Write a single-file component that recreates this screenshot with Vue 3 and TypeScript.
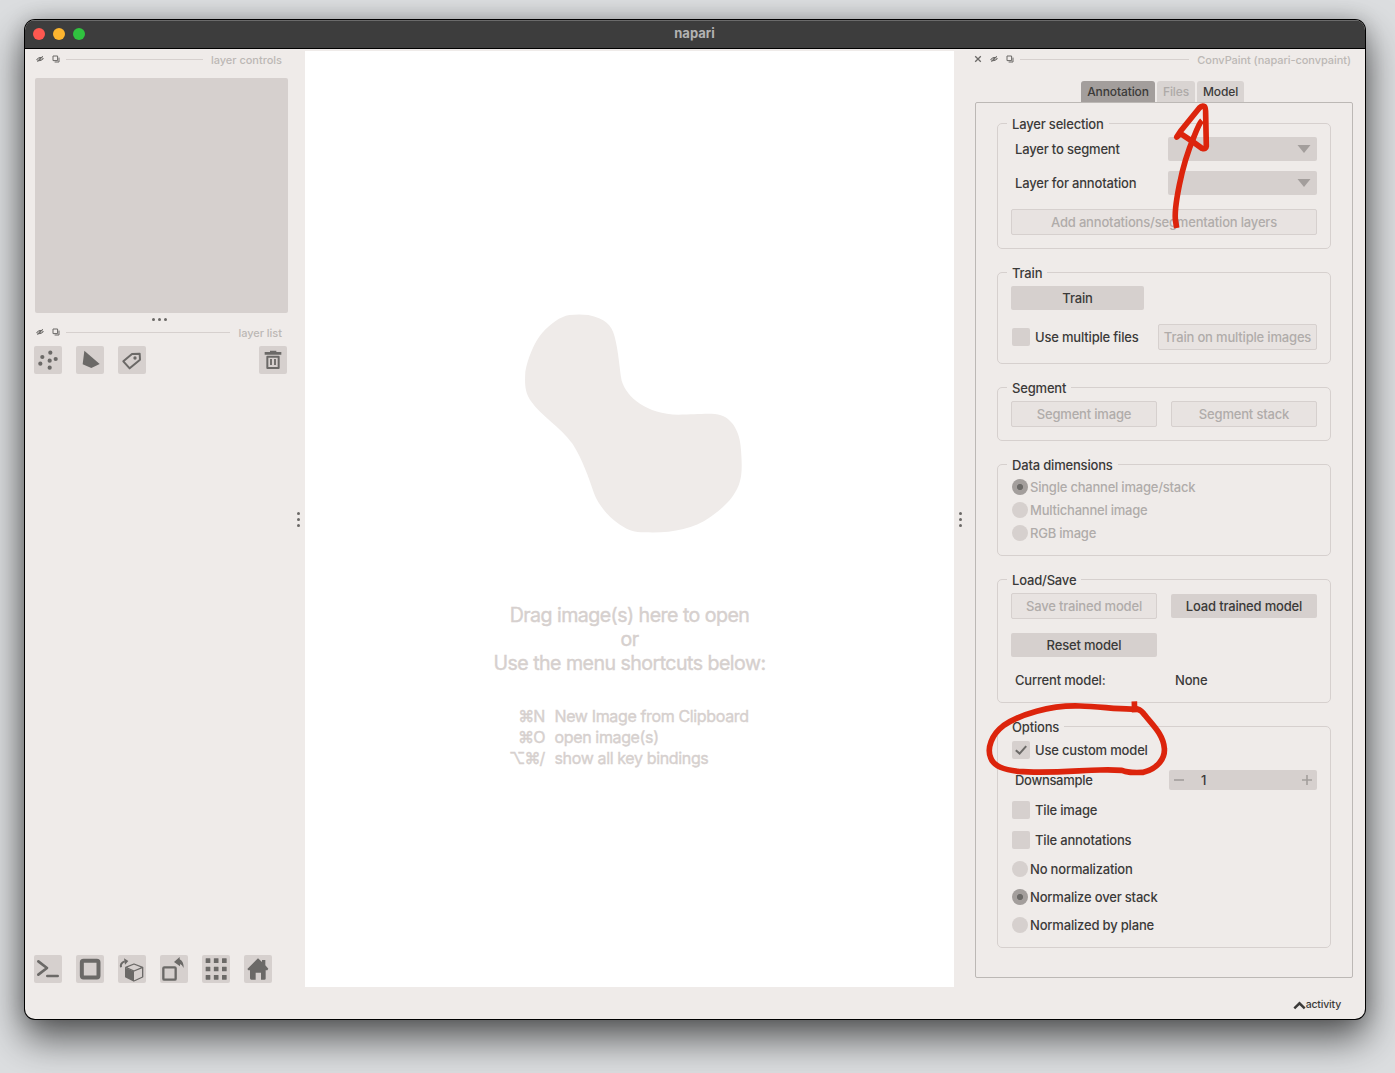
<script setup lang="ts">
interface Shortcut {
  keys: string
  label: string
}

const shortcuts: Shortcut[] = [
  { keys: '⌘N', label: 'New Image from Clipboard' },
  { keys: '⌘O', label: 'open image(s)' },
  { keys: '⌥⌘/', label: 'show all key bindings' },
]

const dimensions: string[] = ['Single channel image/stack', 'Multichannel image', 'RGB image']
const normalizations: string[] = ['No normalization', 'Normalize over stack', 'Normalized by plane']
const gridCells: number[] = [0, 1, 2, 3, 4, 5, 6, 7, 8]
</script>

<template>
  <div class="desktop">
    <div class="window">
      <header class="titlebar">
        <div class="lights"><i class="red"></i><i class="amber"></i><i class="green"></i></div>
        <span class="title">napari</span>
      </header>

      <div class="body">
        <aside class="left">
          <div class="dock-title">
            <svg class="mini" viewBox="0 0 8 8"><path d="M.6 4.6Q4 .8 7.4 3.6Q4 7.2 .6 4.6Z" /><circle cx="4" cy="4.1" r="1.1" /><path d="M1.4 7L6.8 1" /></svg>
            <svg class="mini" viewBox="0 0 8 8"><path d="M1 1h4.6v4.6H1z" /><path d="M7 2.6V7H2.6" /></svg>
            <hr /><span>layer controls</span>
          </div>
          <div class="controls"></div>
          <div class="dots-h"><i></i><i></i><i></i></div>
          <div class="dock-title list">
            <svg class="mini" viewBox="0 0 8 8"><path d="M.6 4.6Q4 .8 7.4 3.6Q4 7.2 .6 4.6Z" /><circle cx="4" cy="4.1" r="1.1" /><path d="M1.4 7L6.8 1" /></svg>
            <svg class="mini" viewBox="0 0 8 8"><path d="M1 1h4.6v4.6H1z" /><path d="M7 2.6V7H2.6" /></svg>
            <hr /><span class="ll">layer list</span>
          </div>
          <div class="tools">
            <button class="tool"><svg viewBox="0 0 84 84"><g class="f"><circle cx="49" cy="20" r="6.3" /><circle cx="25" cy="33" r="6.3" /><circle cx="65" cy="39" r="6.3" /><circle cx="47" cy="44" r="6.3" /><circle cx="19" cy="53" r="6.3" /><circle cx="47" cy="65" r="6.3" /></g></svg></button>
            <button class="tool"><svg viewBox="0 0 84 84"><path class="f" d="M25 14L71 54L46 66L20 55Z" /></svg></button>
            <button class="tool"><svg viewBox="0 0 84 84"><path class="s" stroke-width="6" stroke-linejoin="round" d="M42 24L65 23L66 41L35 67L16 46Z" /><circle class="f" cx="51" cy="36" r="5" /></svg></button>
            <button class="tool trash"><svg viewBox="0 0 84 84"><path class="f" d="M33 18V14h19v4h15v8H17v-8z" /><path class="s" stroke-width="6" stroke-linejoin="round" d="M25 32h34v34H25z" /><path class="s" stroke-width="5.5" d="M36 39v18M48 39v18" /></svg></button>
          </div>
          <div class="spacer"></div>
          <div class="tools bottom">
            <button class="tool"><svg viewBox="0 0 84 84"><path class="s" stroke-width="8" stroke-linecap="round" stroke-linejoin="round" d="M13 19L39 39L13 59M40 63H71" /></svg></button>
            <button class="tool"><svg viewBox="0 0 84 84"><rect class="s" x="17.5" y="17.5" width="50" height="50" rx="5" stroke-width="12" /></svg></button>
            <button class="tool"><svg viewBox="0 0 84 84"><path class="f" d="M21 38L48 49V80L21 67Z" /><path class="s" stroke-width="4" stroke-linejoin="round" d="M23 37L48 27L74 37L48 48ZM74 37V66L48 78" /><path class="s" stroke-width="6" d="M9 37Q6 24 20 19" /><path class="f" d="M18 10L31 18L21 29Z" /></svg></button>
            <button class="tool"><svg viewBox="0 0 84 84"><rect class="s" x="10" y="37" width="37" height="37" rx="3" stroke-width="7" /><path class="f" d="M42 21L59 6V13Q71 18 71 39Q66 28 60 27V34Z" /></svg></button>
            <button class="tool"><svg viewBox="0 0 84 84"><rect v-for="n in gridCells" :key="n" class="f" :x="11 + (n % 3) * 24.5" :y="10 + Math.floor(n / 3) * 25" width="14" height="14" rx="1" /></svg></button>
            <button class="tool"><svg viewBox="0 0 84 84"><path class="f" d="M42 10L54 21V15H64V31L73 41L70 46H65V71Q65 74 61 74H51V53H35V74H22Q18 74 18 70V46H13L10 42Z" /></svg></button>
          </div>
        </aside>

        <div class="handle"><i></i><i></i><i></i></div>

        <main class="canvas">
          <svg class="blob" viewBox="0 0 780 750"><path d="M208 45Q238 42 265 45C315 55 335 75 344 110C356 155 358 205 365 242C380 292 440 342 535 344C580 344 610 340 645 342C695 346 721 395 723 450C728 520 726 550 697 590C675 619 650 637 630 652C575 690 510 700 433 697C405 697 385 691 361 675C325 651 295 615 282 580C265 530 248 480 218 432C180 378 125 350 92 302C74 276 74 250 76 215C83 175 103 125 127 98C153 70 180 50 208 45Z" /></svg>
          <div class="welcome">
            <p>Drag image(s) here to open</p>
            <p>or</p>
            <p class="w3">Use the menu shortcuts below:</p>
          </div>
          <div class="shortcuts">
            <template v-for="s in shortcuts" :key="s.keys">
              <span class="keys">{{ s.keys }}</span><span>{{ s.label }}</span>
            </template>
          </div>
        </main>

        <div class="handle right-handle"><i></i><i></i><i></i></div>

        <aside class="right">
          <div class="dock-title">
            <svg class="mini" viewBox="0 0 8 8"><path d="M1.2 1.2L6.8 6.8M6.8 1.2L1.2 6.8" stroke-width="1.3" /></svg>
            <svg class="mini" viewBox="0 0 8 8"><path d="M.6 4.6Q4 .8 7.4 3.6Q4 7.2 .6 4.6Z" /><circle cx="4" cy="4.1" r="1.1" /><path d="M1.4 7L6.8 1" /></svg>
            <svg class="mini" viewBox="0 0 8 8"><path d="M1 1h4.6v4.6H1z" /><path d="M7 2.6V7H2.6" /></svg>
            <hr /><span class="cp">ConvPaint (napari-convpaint)</span>
          </div>
          <nav class="tabs">
            <span class="tab active">Annotation</span>
            <span class="tab off">Files</span>
            <span class="tab model">Model</span>
          </nav>
          <div class="panel">
            <section class="group g-layer">
              <h3>Layer selection</h3>
              <div class="row h24 mt4"><label class="in">Layer to segment</label><div class="combo"><svg viewBox="0 0 14 8"><path d="M.5 0h13L7 8z" /></svg></div></div>
              <div class="row h24 mt10"><label class="in">Layer for annotation</label><div class="combo"><svg viewBox="0 0 14 8"><path d="M.5 0h13L7 8z" /></svg></div></div>
              <button class="btn off full mt14">Add annotations/segmentation layers</button>
            </section>

            <section class="group g-train">
              <h3>Train</h3>
              <button class="btn train mt4">Train</button>
              <div class="row h26 mt14"><i class="check"></i><label>Use multiple files</label><button class="btn off multi">Train on multiple images</button></div>
            </section>

            <section class="group g-segment">
              <h3>Segment</h3>
              <div class="row h26 mt4 split"><button class="btn off half">Segment image</button><button class="btn off half">Segment stack</button></div>
            </section>

            <section class="group g-data">
              <h3>Data dimensions</h3>
              <div class="radios dims">
                <div v-for="(d, i) in dimensions" :key="d" class="radio dim"><i :class="{ on: i === 0 }"></i><label>{{ d }}</label></div>
              </div>
            </section>

            <section class="group g-load">
              <h3>Load/Save</h3>
              <div class="row h26 mt4 split"><button class="btn off half">Save trained model</button><button class="btn half">Load trained model</button></div>
              <button class="btn half mt14">Reset model</button>
              <div class="row current"><label class="in">Current model:</label><label>None</label></div>
            </section>

            <section class="group g-options">
              <h3>Options</h3>
              <div class="row h18 mt5"><i class="check"><svg viewBox="0 0 18 18"><path d="M3.8 9.2L7.6 12.6L14.2 5.2" /></svg></i><label>Use custom model</label></div>
              <div class="row h20 mt11"><label class="in down">Downsample</label><div class="spin"><svg viewBox="0 0 10 10"><path d="M0 5h10" /></svg><b>1</b><svg viewBox="0 0 10 10"><path d="M0 5h10M5 0v10" /></svg></div></div>
              <div class="row h18 mt11"><i class="check"></i><label>Tile image</label></div>
              <div class="row h18 mt12"><i class="check"></i><label>Tile annotations</label></div>
              <div class="radios norms">
                <div v-for="(n, i) in normalizations" :key="n" class="radio"><i :class="{ on: i === 1 }"></i><label>{{ n }}</label></div>
              </div>
            </section>
          </div>
          <footer class="activity">
            <svg viewBox="0 0 12 8"><path d="M1.2 6.6L6 2L10.8 6.6" /></svg><span>activity</span>
          </footer>
        </aside>
      </div>
    </div>

    <svg class="marks" viewBox="0 0 1395 1073">
      <g transform="translate(1150 75) scale(.33333)">
        <path d="M80 459L77 440C72 415 78 380 88 330C100 270 118 218 132 185C141 162 148 144 156 137" stroke-linecap="butt" />
        <path d="M80 186L92 168L148 99Q156 90 164 95Q167 98 167 118L169 214Q168 224 156 220L128 200L92 176Z" />
      </g>
      <g transform="translate(980 695) scale(.33333)">
        <path d="M463 19L464 52" stroke-linecap="butt" />
        <path d="M468 42C420 45 360 34 300 33C210 30 120 58 70 92C35 118 20 160 32 188C42 215 72 224 115 229C200 236 300 226 360 225C390 224 410 225 425 226C440 234 460 233 490 232C530 222 556 192 553 160C550 118 516 88 495 61Q485 46 472 42" />
      </g>
    </svg>
  </div>
</template>

<style>
body {
  margin: 0;
}
</style>

<style scoped>
* {
  box-sizing: border-box;
}
.desktop {
  position: relative;
  width: 1395px;
  height: 1073px;
  padding: 20px 30px 0 25px;
  overflow: hidden;
  background: #dcdee0;
  font-family: Inter, 'Noto Sans', 'DejaVu Sans', sans-serif;
  font-size: 13px;
  font-weight: 500;
  letter-spacing: -0.18px;
  color: #3b3a39;
}
.window {
  width: 1340px;
  height: 999px;
  border-radius: 10px;
  overflow: hidden;
  background: #efebe9;
  box-shadow: 0 0 0 1px #000, 0 18px 38px 2px rgba(0, 0, 0, 0.6), 0 0 20px rgba(0, 0, 0, 0.2);
}
.titlebar {
  display: flex;
  align-items: center;
  height: 29px;
  padding-left: 8px;
  background: #3d3d3d;
  border-bottom: 1px solid #000;
  box-shadow: inset 0 1px 0 #6b6b6b;
}
.lights {
  display: flex;
  gap: 8px;
  width: 52px;
}
.lights i {
  width: 12px;
  height: 12px;
  border-radius: 50%;
}
.red { background: #fe5850; }
.amber { background: #fdb52f; }
.green { background: #30c23f; }
.title {
  flex: 1;
  padding-right: 61px;
  text-align: center;
  font-weight: 700;
  line-height: 16px;
  padding-bottom: 2px;
  letter-spacing: 0;
  color: #b3b3b3;
}
.body {
  display: flex;
  height: 970px;
}
.left {
  display: flex;
  flex-direction: column;
  width: 267px;
  padding: 2px 4px 36px 9px;
}
.dock-title {
  display: flex;
  align-items: center;
  height: 17px;
  padding: 0 6px 0 2px;
  color: #bcb8b5;
  font-size: 11px;
  line-height: 17px;
}
.mini {
  width: 8px;
  height: 8px;
  margin: 0 8px 1px 0;
  fill: none;
  stroke: #6b6967;
  stroke-width: 1;
}
.dock-title hr {
  flex: 1;
  height: 1px;
  margin: 0 8px 0 -2px;
  border: 0;
  background: #d6d0ce;
}
.dock-title span {
  padding-top: 2px;
  letter-spacing: -0.02px;
}
.dock-title .cp {
  letter-spacing: -0.06px;
}
.controls {
  height: 235px;
  margin: 10px 0 0 1px;
  border-radius: 2px;
  background: #d6d0ce;
}
.dots-h {
  display: flex;
  justify-content: center;
  gap: 3px;
  height: 3px;
  margin: 4.5px 2.5px 0.5px 0;
}
.dots-h i,
.handle i {
  width: 3px;
  height: 3px;
  border-radius: 50%;
  background: #6b6967;
}
.list {
  margin-top: 3px;
}
.tools {
  display: flex;
  gap: 14px;
  height: 28px;
  margin-top: 5px;
}
.tool {
  width: 28px;
  height: 28px;
  padding: 0;
  border: 0;
  border-radius: 2px;
  background: #d6d0ce;
}
.tool svg {
  display: block;
  width: 28px;
  height: 28px;
}
.trash {
  margin-left: auto;
  margin-right: 1px;
}
.f { fill: #6b6967; }
.s {
  fill: none;
  stroke: #6b6967;
}
.spacer {
  flex: 1;
}
.handle {
  display: flex;
  flex-direction: column;
  align-items: center;
  justify-content: center;
  gap: 3px;
  width: 13px;
  padding: 0 1px 30px 0;
}
.canvas {
  display: flex;
  flex-direction: column;
  align-items: center;
  width: 649px;
  height: 936px;
  margin-top: 2px;
  background: #fff;
  color: #d6d0ce;
}
.blob {
  width: 260px;
  height: 250px;
  margin: 249px 0 0 1px;
  fill: #efebe9;
}
.welcome {
  margin-top: 53px;
  font-size: 19.6px;
  font-weight: 400;
  line-height: 24px;
  letter-spacing: -0.54px;
  text-align: center;
  -webkit-text-stroke: 0.4px #d6d0ce;
}
.welcome p {
  margin: 0;
}
.shortcuts {
  display: grid;
  grid-template-columns: 40px 200px;
  column-gap: 10px;
  margin: 31px 0 0 0;
  font-size: 16px;
  font-weight: 400;
  line-height: 21px;
  letter-spacing: -0.36px;
  white-space: nowrap;
  -webkit-text-stroke: 0.4px #d6d0ce;
}
.keys {
  text-align: right;
  letter-spacing: -0.9px;
}
.right {
  width: 398px;
  padding-top: 2px;
}
.right-handle {
  padding-right: 0;
}
.right .dock-title {
  padding: 0 14px 0 7px;
}
.tabs {
  display: flex;
  justify-content: center;
  gap: 2px;
  height: 21px;
  margin: 13px 7px 0 0;
  font-size: 12px;
  line-height: 21px;
  letter-spacing: -0.1px;
}
.tab {
  width: 38px;
  border-radius: 3px 3px 0 0;
  background: #d9d4d2;
  text-align: center;
}
.tab.active {
  width: 74px;
  background: #a39e9c;
}
.tab.off {
  color: #aeaaa8;
}
.tab.model {
  width: 47px;
}
.panel {
  width: 378px;
  height: 876px;
  margin-left: 8px;
  margin-top: 0;
  padding: 20px 21px;
  border: 1px solid #bcb8b5;
  border-radius: 2px;
}
.group {
  width: 334px;
  margin-bottom: 23px;
  padding: 0 13px;
  border: 1px solid #d6d0ce;
  border-radius: 5px;
}
.g-layer { height: 126px; }
.g-train { height: 92px; }
.g-segment { height: 54px; }
.g-data { height: 92px; }
.g-load { height: 124px; }
.g-options { height: 222px; }
.group h3 {
  width: max-content;
  height: 17px;
  margin: -8px 0 0 -4px;
  padding: 0 5px;
  background: #efebe9;
  font-size: 13px;
  font-weight: 500;
  line-height: 17px;
}
.row {
  display: flex;
  align-items: center;
}
.split {
  justify-content: space-between;
}
.h18 { height: 18px; }
.h20 { height: 20px; }
.h24 { height: 24px; }
.h26 { height: 26px; }
.mt4 { margin-top: 4px; }
.mt5 { margin-top: 5px; }
.mt10 { margin-top: 10px; }
.mt11 { margin-top: 11px; }
.mt12 { margin-top: 12px; }
.mt14 { margin-top: 14px; }
label {
  line-height: 17px;
  white-space: nowrap;
}
.in {
  margin-left: 4px;
}
.down {
  letter-spacing: -0.3px;
}
.combo {
  display: flex;
  align-items: center;
  justify-content: flex-end;
  width: 149px;
  height: 24px;
  margin-left: auto;
  padding-right: 6px;
  border-radius: 2px;
  background: #d6d0ce;
}
.combo svg {
  width: 14px;
  height: 8px;
  fill: #a39e9c;
}
.btn {
  display: block;
  height: 24px;
  padding: 0;
  border: 0;
  border-radius: 2px;
  background: #d6d0ce;
  color: inherit;
  font: inherit;
  letter-spacing: inherit;
  white-space: nowrap;
}
.btn.off {
  height: 26px;
  border: 1px solid #d6d0ce;
  background: #e8e3e1;
  color: #b0acaa;
}
.full { width: 306px; }
.train { width: 133px; }
.half { width: 146px; }
.multi {
  width: 159px;
  margin-left: auto;
}
.check {
  width: 18px;
  height: 18px;
  margin: 0 5px 0 1px;
  border-radius: 2px;
  background: #d6d0ce;
}
.check svg {
  display: block;
  fill: none;
  stroke: #6b6967;
  stroke-width: 2;
}
.radios {
  display: flex;
  flex-direction: column;
}
.dims {
  gap: 7px;
  margin-top: 5px;
}
.norms {
  gap: 12px;
  margin-top: 12px;
}
.radio {
  display: flex;
  align-items: center;
  height: 16px;
  padding-left: 1px;
}
.radio i {
  width: 16px;
  height: 16px;
  margin-right: 2px;
  border-radius: 50%;
  background: #d6d0ce;
}
.radio i.on {
  background: radial-gradient(circle, #6b6967 2.7px, #a39e9c 3.5px);
}
.dim label {
  color: #b0acaa;
  letter-spacing: -0.22px;
}
.current {
  height: 17px;
  margin-top: 15px;
}
.current .in {
  width: 160px;
}
.spin {
  display: flex;
  align-items: center;
  width: 148px;
  height: 20px;
  margin-left: auto;
  padding: 0 5px;
  border-radius: 2px;
  background: #d6d0ce;
}
.spin svg {
  width: 10px;
  height: 10px;
  fill: none;
  stroke: #a39e9c;
  stroke-width: 1.6;
}
.spin b {
  flex: 1;
  padding-left: 17px;
  font-weight: 500;
}
.activity {
  display: flex;
  align-items: center;
  justify-content: flex-end;
  height: 16px;
  margin: 18px 24px 0 0;
  font-size: 10.5px;
  letter-spacing: -0.18px;
}
.activity svg {
  width: 13px;
  height: 9px;
  margin-top: 3px;
  fill: none;
  stroke: #3b3a39;
  stroke-width: 2.3;
}
.marks {
  position: absolute;
  left: 0;
  top: 0;
  width: 1395px;
  height: 1073px;
  pointer-events: none;
  fill: none;
  stroke: #dc240c;
  stroke-width: 17;
  stroke-linecap: round;
  stroke-linejoin: round;
}
</style>
